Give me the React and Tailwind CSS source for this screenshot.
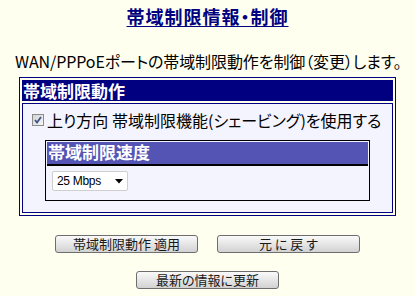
export default function App() {
  return (
    <div className="min-h-[296px] w-[415px] bg-[#fffff0] text-black font-['Noto_Sans_CJK_JP',sans-serif] [font-feature-settings:'palt']">
      <div className="pt-[5px] text-center">
        <span className="text-[18px] leading-[20px] font-bold tracking-[1px] text-[#000080] underline underline-offset-[2px]">
          帯域制限情報・制御
        </span>
      </div>
      <div className="mt-[22px] pl-[15px] text-[16px] leading-[20px] tracking-[-0.1px] whitespace-nowrap">
        WAN/PPPoEポートの帯域制限動作を制御（変更）します。
      </div>
      <div className="ml-[19px] mt-[6px] w-[377px] border border-[#000080] p-[2px] flex flex-col gap-[2px]">
        <div className="h-[21px] bg-[#000080] pl-[1px] text-white font-bold text-[17px] leading-[21px]">
          帯域制限動作
        </div>
        <div className="h-[110px] border border-[#000080] bg-[#f4f4ff] pt-[6px]">
          <div className="flex items-center pl-[9px] gap-[3px] h-[20px]">
            <span className="w-[12px] h-[12px] border border-[#8a8c8e] bg-linear-to-br from-[#d4d4d4] to-[#f6f6f6] flex items-center justify-center">
              <svg width="10" height="10" viewBox="0 0 10 10">
                <path d="M2 5 L4 7.5 L8 2" fill="none" stroke="#3f5288" strokeWidth="1.8" />
              </svg>
            </span>
            <span className="text-[16px] leading-[20px] whitespace-nowrap">
              上り方向 帯域制限機能(シェービング)を使用する
            </span>
          </div>
          <div className="ml-[22px] mt-[10px] w-[325px] h-[61px] border border-black p-[1px] flex flex-col">
            <div className="h-[24px] bg-[#5454b4] border-b-2 border-black pl-[1px] text-white font-bold text-[17px] leading-[19px]">
              帯域制限速度
            </div>
            <div className="pl-[5px] pt-[5px]">
              <div className="w-[76px] h-[20px] bg-white border border-[#cfcfcf] rounded-[2px] flex items-center justify-between pl-[4px] pr-[4px]">
                <span className="font-['Liberation_Sans',sans-serif] text-[12px] tracking-[-0.3px] leading-[18px]">25 Mbps</span>
                <svg width="8" height="5" viewBox="0 0 8 5">
                  <path d="M0 0 H8 L4 4.5 Z" fill="#000" />
                </svg>
              </div>
            </div>
          </div>
        </div>
      </div>
      <div className="mt-[19px] flex justify-center gap-[19px]">
        <button className="w-[143px] h-[18px] border border-[#6e6e6e] rounded-[3px] bg-linear-to-b from-[#fafafa] to-[#d2d2d2] text-[13px] leading-[16px] text-[#1a1a1a]">
          帯域制限動作 適用
        </button>
        <button className="w-[143px] h-[18px] border border-[#6e6e6e] rounded-[3px] bg-linear-to-b from-[#fafafa] to-[#d2d2d2] text-[13px] leading-[16px] text-[#1a1a1a]">
          元 に 戻 す
        </button>
      </div>
      <div className="mt-[18px] flex justify-center">
        <button className="w-[143px] h-[18px] border border-[#6e6e6e] rounded-[3px] bg-linear-to-b from-[#fafafa] to-[#d2d2d2] text-[13px] leading-[16px] text-[#1a1a1a]">
          最新の情報に更新
        </button>
      </div>
    </div>
  );
}
